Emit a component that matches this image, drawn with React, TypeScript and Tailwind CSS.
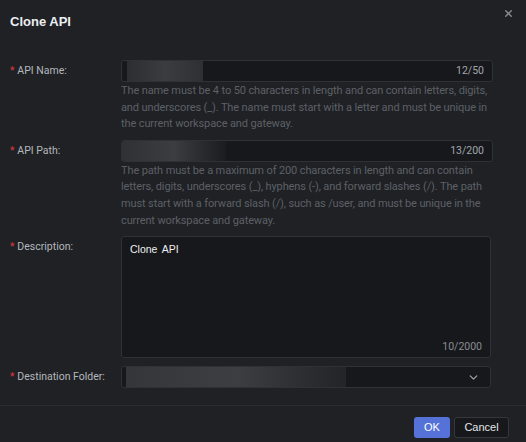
import { ChevronDown, X } from 'lucide-react';

function Label({ text }: { text: string }) {
  return (
    <div className="w-[111px] shrink-0 pt-[4px] text-[10.5px] text-[#b4b7bc] leading-[14px]">
      <span className="text-[#e0393e] mr-[3px] text-[10px]">*</span>
      {text}
    </div>
  );
}

function Help({ children }: { children: React.ReactNode }) {
  return (
    <p className="mt-[1px] text-[11px] leading-[16.6px] tracking-[-0.12px] text-[#5d6066] pr-[2px]">{children}</p>
  );
}

export default function App() {
  return (
    <div
      className="w-[526px] h-[442px] bg-[#1f2125] flex flex-col relative overflow-hidden"
      style={{ fontFamily: 'Roboto, "Liberation Sans", Arial, sans-serif' }}
    >
      {/* Header */}
      <div className="h-[50px] px-[10px] pt-[13px]">
        <h1 className="text-[13px] font-bold text-[#eceef1] leading-[18px]" style={{ fontFamily: '"Liberation Sans", Arial, sans-serif' }}>
          Clone API
        </h1>
      </div>
      <button className="absolute right-[12px] top-[8px] text-[#8a8d92]">
        <X size={11} strokeWidth={3} />
      </button>

      {/* Form */}
      <div className="flex flex-col pl-[10px] pr-[33px] pt-[10px]">
        {/* API Name */}
        <div className="flex">
          <Label text="API Name:" />
          <div className="flex-1">
            <div className="h-[22px] rounded-[3px] border border-[#2e3136] bg-[#16181b] flex items-center pr-[8px] relative overflow-hidden">
              <div className="ml-[5px] h-[20px] w-[76px] bg-gradient-to-r from-[#2c2e32] via-[#3a3c40] to-[#2e3034]" />
              <span className="ml-auto text-[10.5px] text-[#a3a6ab]">12/50</span>
            </div>
            <Help>
              The name must be 4 to 50 characters in length and can contain letters, digits, and underscores (_). The name must start with a letter and must be unique in the current workspace and gateway.
            </Help>
          </div>
        </div>

        {/* API Path */}
        <div className="flex mt-[7px]">
          <Label text="API Path:" />
          <div className="flex-1">
            <div className="h-[22px] rounded-[3px] border border-[#2e3136] bg-[#16181b] flex items-center pr-[8px] relative overflow-hidden">
              <div className="h-[20px] w-[104px] bg-gradient-to-r from-[#2f3135] via-[#3b3d41] to-[#1a1c1f]" />
              <span className="ml-auto text-[10.5px] text-[#a3a6ab]">13/200</span>
            </div>
            <Help>
              The path must be a maximum of 200 characters in length and can contain letters, digits, underscores (_), hyphens (-), and forward slashes (/). The path must start with a forward slash (/), such as /user, and must be unique in the current workspace and gateway.
            </Help>
          </div>
        </div>

        {/* Description */}
        <div className="flex mt-[7px]">
          <Label text="Description:" />
          <div className="flex-1 pr-[2px]">
            <div className="h-[122px] rounded-[3px] border border-[#2e3136] bg-[#16181b] flex flex-col px-[8px] pt-[5px] pb-[3px]">
              <span className="text-[10.5px] text-[#eceef1] leading-[14px]" style={{ fontFamily: '"Liberation Sans", Arial, sans-serif', wordSpacing: '2px' }}>
                Clone API
              </span>
              <span className="mt-auto self-end text-[10.5px] text-[#8a8d92] leading-[14px]">10/2000</span>
            </div>
          </div>
        </div>

        {/* Destination Folder */}
        <div className="flex mt-[8px]">
          <Label text="Destination Folder:" />
          <div className="flex-1 pr-[2px]">
            <div className="h-[22px] rounded-[3px] border border-[#2e3136] bg-[#16181b] flex items-center pr-[10px] overflow-hidden">
              <div className="ml-[4px] h-[20px] w-[220px] bg-gradient-to-r from-[#34363a] via-[#3c3e42] to-[#222428]" />
              <ChevronDown size={13} strokeWidth={2.5} className="ml-auto text-[#9a9da2]" />
            </div>
          </div>
        </div>
      </div>

      {/* Footer */}
      <div className="mt-auto border-t border-[#2a2d31] h-[37px] flex items-start justify-end gap-[4px] pr-[17px] pt-[11px]">
        <button className="h-[21px] w-[36px] rounded-[3px] bg-[#5472d8] text-white text-[11px]" style={{ fontFamily: '"Liberation Sans", Arial, sans-serif' }}>
          OK
        </button>
        <button className="h-[21px] w-[55px] rounded-[3px] border border-[#34373c] bg-[#16181b] text-[#e4e6e9] text-[11px]" style={{ fontFamily: '"Liberation Sans", Arial, sans-serif' }}>
          Cancel
        </button>
      </div>
    </div>
  );
}
